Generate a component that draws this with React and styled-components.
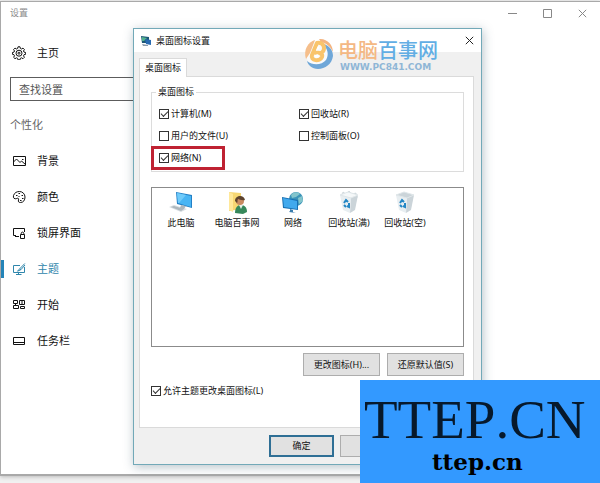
import React from "react";
import styled, { createGlobalStyle, css } from "styled-components";

const GlobalStyle = createGlobalStyle`
  * { box-sizing: border-box; }
  body {
    margin: 0;
    background: #f1f1f1;
    color: #111;
    font: 9px/12px "Noto Sans", "Noto Sans CJK SC", sans-serif;
  }
  button, input { font: inherit; color: inherit; }
`;

const Desktop = styled.div`
  position: relative;
  display: flex;
  min-height: 100vh;
  padding: 1px 0 7px;
  overflow: hidden;
`;

const SettingsWindow = styled.main`
  flex: 1;
  border: 1px solid #a9a9a9;
  border-width: 1px 0 2px 1px;
  background: #fff;
  box-shadow: 0 1px 4px #bbb;
`;

const TitleBar = styled.header`
  display: flex;
  align-items: center;
  justify-content: space-between;
  height: 22px;
  padding-left: 9px;
  color: #8a8a8a;
`;

const WindowControls = styled.div`
  display: flex;
`;

const ControlButton = styled.button`
  display: grid;
  place-items: center;
  width: 35px;
  height: 20px;
  padding: 0;
  border: 0;
  background: none;
  color: #888;
`;

const Sidebar = styled.nav`
  display: flex;
  flex-direction: column;
  width: 160px;
  padding-top: 11px;
  font-size: 11px;
  line-height: 16px;
`;

const NavLink = styled.a`
  display: flex;
  align-items: center;
  gap: 11px;
  height: 36px;
  padding-left: 11px;
  color: ${(p) => (p.$active ? "#2f86ac" : "#111")};
  text-decoration: none;
  ${(p) =>
    p.$active &&
    css`
      background: linear-gradient(#2484b8, #2484b8) left / 3px 18px no-repeat;
    `}
`;

const SearchBox = styled.input`
  height: 24px;
  margin: 6px 0 0 9px;
  padding: 0 8px;
  border: 1px solid #5c5c5c;
  background: #fff;
  outline: 0;
  &::placeholder { color: #555; opacity: 1; }
`;

const SectionTitle = styled.h2`
  margin: 16px 0 10px 9px;
  color: #666;
  font-size: 11px;
  font-weight: 400;
  line-height: 16px;
`;

const Dialog = styled.section`
  position: absolute;
  top: 28px;
  left: 133px;
  width: 349px;
  border: 1px solid #72a9b8;
  background: #f0f0f0;
  box-shadow: 1px 2px 10px rgba(50, 80, 100, 0.35);
`;

const DialogTitle = styled.header`
  display: flex;
  align-items: center;
  gap: 4px;
  height: 23px;
  padding: 0 6px;
  background: #fff;
  h1 {
    flex: 1;
    margin: 0;
    font-size: 9px;
    font-weight: 400;
  }
`;

const CloseButton = styled.button`
  display: grid;
  place-items: center;
  width: 11px;
  height: 20px;
  padding: 0;
  border: 0;
  background: none;
  color: #222;
`;

const TabList = styled.div`
  display: flex;
  padding: 6px 5px 0;
`;

const Tab = styled.button`
  height: 19px;
  margin-bottom: -1px;
  padding: 0 5px;
  border: 1px solid #dadada;
  border-bottom: 0;
  background: #fff;
  z-index: 1;
`;

const TabPanel = styled.div`
  margin: 0 7px 0 5px;
  padding: 9px 9px 26px 11px;
  border: 1px solid #dadada;
  background: #fff;
`;

const IconFieldset = styled.fieldset`
  display: grid;
  grid-template-columns: 140px 1fr;
  grid-auto-rows: 22px;
  justify-items: start;
  min-width: 0;
  margin: 0;
  padding: 5px 0 2px;
  border: 1px solid #dcdcdc;
  legend {
    margin-left: 4px;
    padding: 0 2px;
  }
`;

const CheckLabel = styled.label`
  display: flex;
  align-items: center;
  gap: 2px;
  height: ${(p) => (p.$flush ? "20px" : "22px")};
  padding: ${(p) => (p.$flush ? "0" : "0 23px 0 7px")};
  white-space: nowrap;
  ${(p) =>
    p.$marked &&
    css`
      outline: 3px solid #bf2232;
      outline-offset: -2px;
    `}
`;

const CheckBox = styled.input`
  appearance: none;
  display: grid;
  place-items: center;
  width: 10px;
  height: 10px;
  margin: 0;
  border: 1px solid #333;
  background: #fff;
  &:checked::after {
    content: "";
    width: 6px;
    height: 3px;
    margin-bottom: 2px;
    border: solid #333;
    border-width: 0 0 1px 1px;
    transform: rotate(-45deg);
  }
`;

const IconList = styled.ul`
  display: grid;
  grid-template-columns: repeat(auto-fill, 56px);
  align-content: start;
  min-height: 160px;
  margin: 15px 0 6px;
  padding: 3px 0 0 1px;
  border: 1px solid #8b8b8b;
  list-style: none;
`;

const IconItem = styled.li`
  display: flex;
  flex-direction: column;
  align-items: center;
  gap: 2px;
  white-space: nowrap;
`;

const ButtonRow = styled.div`
  display: flex;
  justify-content: flex-end;
  gap: 7px;
  margin-bottom: 5px;
`;

const PushButton = styled.button`
  width: 77px;
  height: 23px;
  padding: 0;
  border: 1px solid #adadad;
  background: #e1e1e1;
  white-space: nowrap;
`;

const Footer = styled.footer`
  display: flex;
  justify-content: flex-end;
  gap: 6px;
  padding: 7px 5px 7px;
`;

const FooterButton = styled(PushButton)`
  width: 65px;
  height: 22px;
  border: ${(p) => (p.$primary ? "2px solid #2f6f95" : "1px solid #adadad")};
`;

const SiteMark = styled.div`
  position: absolute;
  top: 36px;
  left: 303px;
  display: flex;
  align-items: flex-start;
  gap: 4px;
`;

const SiteName = styled.div`
  color: #62aee4;
  font-size: 20px;
  line-height: 27px;
  font-weight: 500;
  font-family: "Noto Sans CJK SC", sans-serif;
  white-space: nowrap;
  span { color: #f4b884; }
`;

const SiteUrl = styled.div`
  padding-left: 2px;
  color: #8fb6d6;
  font: bold 9px/9px "DejaVu Sans", sans-serif;
`;

const Banner = styled.aside`
  position: absolute;
  right: 0;
  bottom: 0;
  display: flex;
  flex-direction: column;
  width: 240px;
  height: 103px;
  padding: 10px 0 0 4px;
  background: #3399ff;
  color: #07192c;
  font: 55px/60px "Liberation Serif", serif;
  font-kerning: none;
`;

const BannerSub = styled.div`
  padding-left: 68px;
  color: #000;
  font: bold 23px/24px "DejaVu Serif", serif;
`;

const Line = ({ children }) => (
  <svg width="14" height="14" viewBox="0 0 14 14" fill="none" stroke="currentColor" strokeWidth="1" aria-hidden="true">
    {children}
  </svg>
);

const GearIcon = () => (
  <Line>
    <path d="M5.6 2.5 6 .8h2l.4 1.7 1.1.5 1.5-.9 1.4 1.4-.9 1.5.5 1.1 1.7.4v1.8l-1.7.4-.5 1.1.9 1.5-1.4 1.4-1.5-.9-1.1.5-.4 1.6H6l-.4-1.6-1.1-.5-1.5.9-1.4-1.4.9-1.5L2 8.7.4 8.3V6.5L2 6.1 2.5 5l-.9-1.5L3 2.1l1.5.9z" />
    <circle cx="7" cy="7.2" r="3" />
    <circle cx="7" cy="7.2" r="1" />
  </Line>
);
const PictureIcon = () => (
  <Line>
    <path d="M1.500 2.500h12v9h-12zM1.500 8l3-3 3.500 3.500 1.500-1.500 4 3.500" />
    <path d="M10 5.500h1.500" />
  </Line>
);
const PaletteIcon = () => (
  <Line>
    <path d="M1.5 5.5C2.5 2.5 5 1.5 7.5 1.5c3 0 5.5 2.500 5.500 5.500s-1.500 5.500-4.500 5.500c-2 0-2.500-1-2-2.500.4-1.300-.3-2.300-1.700-1.500-2.300 1-4-.5-3.300-3z" />
    <path d="M4 5.500h1.500M6.500 3.500H8M9.500 5.500H11M10 8.500h1.500M8 10.500h1.500M6.500 6.500h1" />
  </Line>
);
const LockScreenIcon = () => (
  <Line>
    <path d="M7 10.500H3M4 9.500H1.500v-7h11V6" />
    <path d="M8.500 8.500h4v4h-4zM9.200 8.500v-1c0-1.900 2.600-1.900 2.600 0v1" />
  </Line>
);
const ThemeIcon = () => (
  <Line>
    <path d="M8 3.500H1.500v7h11V5M4 12.500h5.500M6.500 10.500v2" />
    <path d="m12.800 1.500-5 5.200 1.100 1L13 3M7.800 6.700 5.500 9.200l3.400-1.500" />
  </Line>
);
const StartIcon = () => (
  <Line>
    <path d="M1.500 2.500h4v3h-4zM7.500 2.500h5v4h-5zM1.500 7.500h5v3h-5zM8.500 8.500h4v2h-4zM3.500 5.500v2M10 2.500v4" />
  </Line>
);
const TaskbarIcon = () => (
  <Line>
    <path d="M1.500 3.500h11v7h-11zM1 8.500h12" />
  </Line>
);

const CrossIcon = () => (
  <svg width="9" height="9" viewBox="0 0 9 9" stroke="currentColor" fill="none" aria-hidden="true">
    <path d="m.8.8 7.400 7.400M8.200.8.8 8.200" />
  </svg>
);

const Art = ({ children }) => (
  <svg width="24" height="24" viewBox="0 0 24 24" aria-hidden="true">
    {children}
  </svg>
);

const ComputerArt = () => (
  <Art>
    <path d="m7 1 16 3v13L8 13z" fill="#2380c6" />
    <path d="m8 2 14 3v11L9 12z" fill="#48b5f4" />
    <path d="m8 2 9 2-7 8H9z" fill="#70cbfa" />
    <path d="m0 16 5-2 13 4-6 3z" fill="#d7dde1" />
    <path d="m2 16 3-1 10 3-3 2zM12 14l5 1-2 3-4-1z" fill="#adb7bd" />
  </Art>
);
const UserArt = () => (
  <Art>
    <path d="m4 1 12 1v16L4 20z" fill="#f6d773" />
    <path d="m4 1 4 2v18l-4-2z" fill="#ffe89a" />
    <path d="M10 22c0-5 2-8 6-8s6 3 6 7l-4 2z" fill="#36885b" />
    <path d="m14 14 2 4 2-4z" fill="#e4efe7" />
    <circle cx="15" cy="10" r="4" fill="#c98a62" />
    <path d="M10 10c0-6 9-7 10-1-3 1-6-1-7-1-1 1 0 3-1 4z" fill="#5d432e" />
  </Art>
);
const NetworkArt = () => (
  <Art>
    <circle cx="15" cy="8" r="7" fill="#3b94b9" />
    <path d="M10 4c3-4 7-3 9-1l-4 3-4 1zM17 7l4-2 1 5-4 3z" fill="#83c5cc" />
    <path d="m1 6 16 3v10L2 17z" fill="#176fb2" />
    <path d="m2 7 14 3v8L3 16z" fill="#41a9ed" />
    <path d="m9 18 3 1v2l3 1-7-1 1-1z" fill="#397dae" />
  </Art>
);
const BinArt = ({ full }) => (
  <Art>
    {full && <path d="m4 5 2-4 3 2 3-3 3 3 4-1 1 5-8 2z" fill="#dde5e9" stroke="#b9c5cb" strokeWidth=".5" />}
    <path d="m3 4 11 3-1 15-7-3z" fill="#e8eef1" />
    <path d="m14 7 7-3-3 15-5 3z" fill="#cbd4d9" />
    <path d="m3 4 8-3 10 3-7 3z" fill={full ? "#f5f8f9" : "#cbd4d9"} stroke="#dfe6e9" />
    <path d="m7 12 2-3 2 2M12 12v4l-2-1M9 16l-2-2" fill="none" stroke="#2487c5" strokeWidth="2" />
  </Art>
);

const DialogIcon = () => (
  <svg width="12" height="12" viewBox="0 0 12 12" aria-hidden="true">
    <path d="m1 1 8 1v6L2 8z" fill="#1c5776" />
    <path d="m2 2 5 1-3 3H2z" fill="#54b38e" />
    <path d="m5 4 6 1v5l-5-1z" fill="#286ab1" />
    <path d="m2 9 6 1v1L3 11z" fill="#8b9bab" />
  </svg>
);

const SiteLogo = () => (
  <svg width="31" height="34" viewBox="0 0 31 34" fill="none" aria-hidden="true">
    <circle cx="16" cy="18" r="13" fill="#f8fafc" />
    <path d="M3 23C0 14 5 6 12 4L7 17z" fill="#f5be8b" />
    <path d="M16 3c8-1 14 6 14 13-3-6-7-9-12-10z" fill="#f4b480" />
    <path d="M20 8c6 1 10 6 10 12-1 8-8 13-15 13C9 33 5 29 4 25c6 5 15 4 19-1 3-5 2-11-3-16z" fill="#6fa7d8" />
    <path d="m14 7-5 12c-2 6 8 7 10 2 1-3-2-5-6-4 5 1 8-1 8-5s-4-6-7-5z" stroke="#f9c46c" strokeWidth="4" strokeLinejoin="round" />
    <path d="m15 10-2 4c3 0 5-3 2-4zM12 19c-1 4 4 3 4 1s-2-2-4-1z" fill="#fff" />
  </svg>
);

const navItems = [
  ["背景", PictureIcon],
  ["颜色", PaletteIcon],
  ["锁屏界面", LockScreenIcon],
  ["主题", ThemeIcon],
  ["开始", StartIcon],
  ["任务栏", TaskbarIcon],
];

const iconChoices = [
  { text: "计算机(M)", checked: true },
  { text: "回收站(R)", checked: true },
  { text: "用户的文件(U)" },
  { text: "控制面板(O)" },
  { text: "网络(N)", checked: true, marked: true },
];

const desktopIcons = [
  ["此电脑", <ComputerArt />],
  ["电脑百事网", <UserArt />],
  ["网络", <NetworkArt />],
  ["回收站(满)", <BinArt full />],
  ["回收站(空)", <BinArt />],
];

const Check = ({ text, checked, ...rest }) => (
  <CheckLabel {...rest}>
    <CheckBox type="checkbox" defaultChecked={checked} />
    {text}
  </CheckLabel>
);

export default function App() {
  return (
    <Desktop>
      <GlobalStyle />
      <SettingsWindow>
        <TitleBar>
          <span>设置</span>
          <WindowControls>
            <ControlButton aria-label="最小化">
              <svg width="9" height="9" stroke="currentColor"><path d="M0 4.500h9" /></svg>
            </ControlButton>
            <ControlButton aria-label="最大化">
              <svg width="9" height="9" fill="none" stroke="currentColor"><path d="M.5.5h8v8h-8z" /></svg>
            </ControlButton>
            <ControlButton aria-label="关闭"><CrossIcon /></ControlButton>
          </WindowControls>
        </TitleBar>
        <Sidebar>
          <NavLink href="#home"><GearIcon />主页</NavLink>
          <SearchBox type="text" placeholder="查找设置" aria-label="查找设置" />
          <SectionTitle>个性化</SectionTitle>
          {navItems.map(([text, Icon]) => (
            <NavLink key={text} href={`#${text}`} $active={text === "主题"}>
              <Icon />
              {text}
            </NavLink>
          ))}
        </Sidebar>
      </SettingsWindow>

      <Dialog role="dialog" aria-labelledby="dialog-title">
        <DialogTitle>
          <DialogIcon />
          <h1 id="dialog-title">桌面图标设置</h1>
          <CloseButton aria-label="关闭"><CrossIcon /></CloseButton>
        </DialogTitle>
        <TabList role="tablist">
          <Tab role="tab" aria-selected="true">桌面图标</Tab>
        </TabList>
        <TabPanel role="tabpanel">
          <IconFieldset>
            <legend>桌面图标</legend>
            {iconChoices.map(({ text, checked, marked }) => (
              <Check key={text} text={text} checked={checked} $marked={marked} />
            ))}
          </IconFieldset>
          <IconList>
            {desktopIcons.map(([text, art]) => (
              <IconItem key={text}>
                {art}
                {text}
              </IconItem>
            ))}
          </IconList>
          <ButtonRow>
            <PushButton>更改图标(H)...</PushButton>
            <PushButton>还原默认值(S)</PushButton>
          </ButtonRow>
          <Check text="允许主题更改桌面图标(L)" checked $flush />
        </TabPanel>
        <Footer>
          <FooterButton $primary>确定</FooterButton>
          <FooterButton aria-label="取消" />
          <FooterButton aria-label="应用" />
        </Footer>
      </Dialog>

      <SiteMark>
        <SiteLogo />
        <div>
          <SiteName><span>电脑</span>百事网</SiteName>
          <SiteUrl>WWW.PC841.COM</SiteUrl>
        </div>
      </SiteMark>

      <Banner>
        TTEP.CN
        <BannerSub>ttep.cn</BannerSub>
      </Banner>
    </Desktop>
  );
}
